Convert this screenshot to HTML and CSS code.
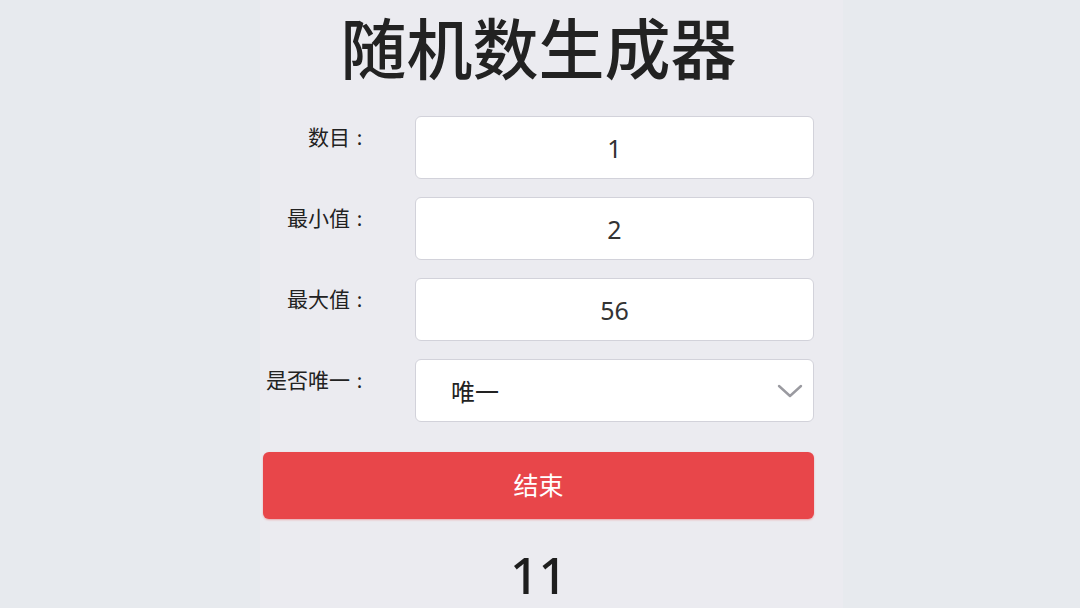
FILE: index.html
```html
<!DOCTYPE html>
<html lang="zh">
<head>
<meta charset="utf-8">
<title>随机数生成器</title>
<link rel="stylesheet" href="styles.css">
</head>
<body>
<main class="page">
  <h1 class="title">随机数生成器</h1>
  <div class="form">
    <div class="row">
      <label class="label">数目<span class="colon">:</span></label>
      <div class="field">1</div>
    </div>
    <div class="row">
      <label class="label">最小值<span class="colon">:</span></label>
      <div class="field">2</div>
    </div>
    <div class="row">
      <label class="label">最大值<span class="colon">:</span></label>
      <div class="field">56</div>
    </div>
    <div class="row">
      <label class="label">是否唯一<span class="colon">:</span></label>
      <div class="field select">
        <span>唯一</span>
        <svg class="chev" width="26" height="16" viewBox="0 0 26 16"><path d="M2 3 L13 13 L24 3" fill="none" stroke="#9a9aa0" stroke-width="2.4" stroke-linecap="round" stroke-linejoin="round"/></svg>
      </div>
    </div>
  </div>
  <button class="btn">结束</button>
  <div class="result">11</div>
</main>
</body>
</html>
```
FILE: styles.css
```css
html, body {
  margin: 0;
  padding: 0;
  background: #e7eaee;
  height: 100%;
  overflow: hidden;
}
body {
  font-family: "Noto Sans", "Noto Sans CJK SC", sans-serif;
  color: #222;
}
.page {
  margin-left: 260px;
  width: 583px;
  min-height: 608px;
  background: #ebebf0;
  padding: 0 29px 0 3px;
  box-sizing: border-box;
  display: flex;
  flex-direction: column;
}
.title {
  margin: 0;
  font-family: "Noto Sans CJK SC", sans-serif;
  font-size: 66px;
  line-height: 90px;
  font-weight: 500;
  text-align: center;
  color: #222;
}
.form {
  margin-top: 26px;
  display: flex;
  flex-direction: column;
  gap: 18px;
}
.row {
  display: flex;
  align-items: flex-start;
}
.label {
  width: 106px;
  padding-top: 7px;
  text-align: right;
  font-family: "Noto Sans CJK SC", sans-serif;
  font-size: 21px;
  line-height: 26px;
  color: #222;
  flex: none;
}
.colon {
  display: inline-block;
  width: 19px;
  text-align: center;
  font-size: 20px;
}
.field {
  margin-left: 46px;
  flex: 1;
  height: 63px;
  box-sizing: border-box;
  background: #fff;
  border: 1.5px solid #d2d2da;
  border-radius: 6px;
  display: flex;
  align-items: center;
  justify-content: center;
  font-size: 25px;
  color: #333;
}
.select {
  justify-content: space-between;
  padding: 0 10px 0 35px;
  font-family: "Noto Sans CJK SC", sans-serif;
  font-size: 24px;
  color: #222;
}
.btn {
  margin-top: 30px;
  height: 67px;
  border: none;
  border-radius: 6px;
  background: #e8464a;
  color: #fff;
  font-family: "Noto Sans CJK SC", sans-serif;
  font-size: 25px;
  padding: 0 0 3px;
  box-shadow: 0 1px 2px rgba(232, 70, 74, 0.4);
}
.result {
  margin-top: 26px;
  text-align: center;
  font-size: 50px;
  line-height: 60px;
  font-weight: 500;
  color: #1e1e1e;
}
```
